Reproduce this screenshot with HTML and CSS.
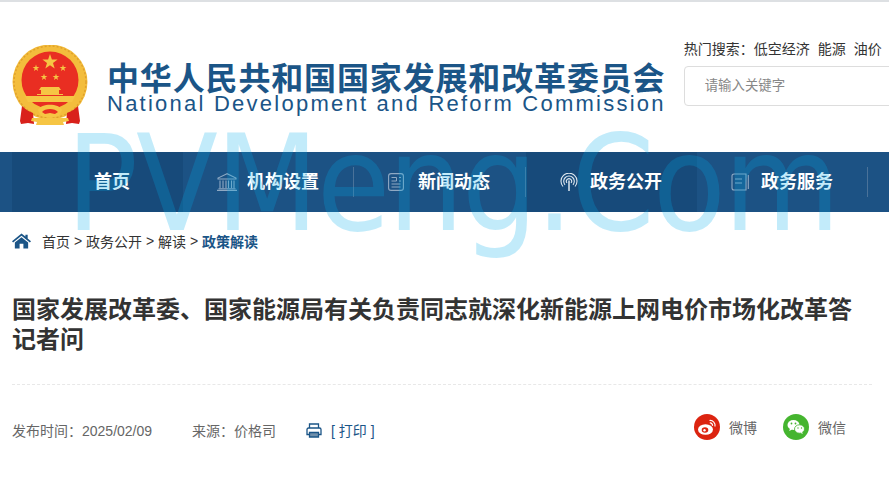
FILE: index.html
```html
<!DOCTYPE html>
<html lang="zh-CN">
<head>
    <meta charset="UTF-8">
    <title>国家发展改革委、国家能源局有关负责同志就深化新能源上网电价市场化改革答记者问</title>
    <link rel="stylesheet" href="styles.css">
</head>
<body>
    <header class="top">
        <svg class="emblem" viewBox="0 0 76 80" aria-hidden="true">
            <!-- ring and red field -->
            <circle cx="38" cy="37" r="37.500" fill="#f3bd3c"/>
            <circle cx="38" cy="37" r="36" fill="none" stroke="#e0a02c" stroke-width="1.500" stroke-dasharray="2 2"/>
            <circle cx="38" cy="35" r="28.500" fill="#e92e22"/>
            <!-- stars -->
            <polygon points="38,9 39.900,14.400 45.600,14.500 41,18 42.700,23.500 38,20.200 33.300,23.500 35,18 30.400,14.500 36.100,14.400" fill="#f6c544"/>
            <polygon points="24,19.500 24.800,22 27.400,22 25.300,23.500 26.100,26 24,24.500 21.900,26 22.700,23.500 20.600,22 23.200,22" fill="#f6c544"/>
            <polygon points="51,19.500 51.800,22 54.400,22 52.300,23.500 53.100,26 51,24.500 48.900,26 49.700,23.500 47.600,22 50.200,22" fill="#f6c544"/>
            <polygon points="32,28.500 32.800,31 35.400,31 33.300,32.500 34.100,35 32,33.500 29.900,35 30.700,32.500 28.600,31 31.200,31" fill="#f6c544"/>
            <polygon points="44,28.500 44.800,31 47.400,31 45.300,32.500 46.100,35 44,33.500 41.900,35 42.700,32.500 40.600,31 43.200,31" fill="#f6c544"/>
            <!-- gate -->
            <path d="M29 42h18l2 3h-2l1 4h3v1H25v-1h3l1-4h-2z" fill="#f6c544"/>
            <path d="M13 51h50l-3 6H16z" fill="#f6c544"/>
            <path d="M24 45h5v4h-5zM47 45h5v4h-5z" fill="#e92e22"/>
            <!-- drapes and bottom ornament -->
            <path d="M10 61c3 3 6 5 11 7l1 11-6-1-7 1-1-3z" fill="#d9211b"/>
            <path d="M66 61c-3 3-6 5-11 7l-1 11 6-1 7 1 1-3z" fill="#d9211b"/>
            <path d="M20 73h36l1 3-6 1 1 3H24l1-3-6-1z" fill="#f6c544"/>
            <path d="M26 65c3-7 21-7 24 0l-3 6-9 2-9-2z" fill="#f6c544"/>
            <path d="M30 67c3-4 13-4 16 0l-3 2-5-1-5 1z" fill="#e92e22"/>
        </svg>
        <div class="brand">
            <div class="brand-cn">中华人民共和国国家发展和改革委员会</div>
            <div class="brand-en">National Development and Reform Commission</div>
        </div>
        <div class="search-area">
            <div class="hot">热门搜索：<span>低空经济</span><span>能源</span><span>油价</span></div>
            <div class="search-box">请输入关键字</div>
        </div>
    </header>

    <nav class="nav">
        <a class="nav-item item-home"><span class="nav-text">首页</span></a>
        <a class="nav-item item-org">
            <svg class="nav-icon icon-wide" viewBox="0 0 20 18" aria-hidden="true">
                <path d="M10 .7 1 5v1h18V5zM3 7.500v7.500M6 7.500v7.500M9 7.500v7.500M11.500 7.500v7.500M14.500 7.500v7.500M17 7.500v7.500M1.500 15.800h17M0 17.400h20" fill="none" stroke="#8fa9c3" stroke-width="1.100"/>
            </svg><span class="nav-text">机构设置</span></a>
        <a class="nav-item item-news">
            <svg class="nav-icon" viewBox="0 0 16 18" aria-hidden="true">
                <rect x=".6" y=".6" width="14.800" height="16.800" rx="2.500" fill="none" stroke="#8fa9c3" stroke-width="1.100"/>
                <path d="M3.500 4.500h5v3.500h-5M11 4.500h2M11 8h2M3.500 11h9M3.500 14h9" fill="none" stroke="#8fa9c3" stroke-width="1"/>
            </svg><span class="nav-text">新闻动态</span></a>
        <a class="nav-item item-open">
            <svg class="nav-icon" viewBox="0 0 18 18" aria-hidden="true">
                <path d="M3 13.500a8 8 0 1 1 12 0M5 11.800a5.300 5.300 0 1 1 8 0M7 10a2.600 2.600 0 1 1 4 0" fill="none" stroke="#dfe8f0" stroke-width="1.100"/>
                <path d="M9 7.500V18" stroke="#dfe8f0" stroke-width="1.500"/>
            </svg><span class="nav-text">政务公开</span></a>
        <a class="nav-item item-service">
            <svg class="nav-icon" viewBox="0 0 18 18" aria-hidden="true">
                <path d="M15 1H3a2 2 0 0 0-2 2v12a2 2 0 0 0 2 2h12zM17.300 2v14" fill="none" stroke="#8fa9c3" stroke-width="1.100"/>
                <path d="M4 6h7M4 10h7" fill="none" stroke="#8fa9c3" stroke-width="1"/>
            </svg><span class="nav-text">政务服务</span></a>
    </nav>

    <div class="crumbs">
        <svg class="home-icon" viewBox="0 0 20 16" aria-hidden="true">
            <path d="M10 0 0 8.200l1.200 1.300L10 2.400l8.800 7.100L20 8.200 16.500 5.300V1.500h-2.400v1.800z" fill="#1b5587"/>
            <path d="M10 4 3 9.700V16h5v-5h4v5h5V9.700z" fill="#1b5587"/>
        </svg>
        <span>首页</span><i>&gt;</i><span>政务公开</span><i>&gt;</i><span>解读</span><i>&gt;</i><span class="current">政策解读</span>
    </div>

    <main class="article">
        <h1>国家发展改革委、国家能源局有关负责同志就深化新能源上网电价市场化改革答记者问</h1>
        <div class="meta">
            <span class="meta-date">发布时间：2025/02/09</span>
            <span class="meta-source">来源：价格司</span>
            <span class="meta-print">
                <svg class="print-icon" viewBox="0 0 16 15" aria-hidden="true">
                    <path d="M3.500 5V1h9v4M3.500 11.500H1V6.500A1.500 1.500 0 0 1 2.500 5h11A1.500 1.500 0 0 1 15 6.500v5h-2.500" fill="none" stroke="#1b5587" stroke-width="1.300"/>
                    <path d="M3.500 9.500h9V14h-9z" fill="#6f8fab" stroke="#1b5587" stroke-width="1.300"/>
                </svg>[ 打印 ]</span>
            <div class="shares">
                <span class="share">
                    <svg class="share-icon" viewBox="0 0 26 26" aria-hidden="true">
                        <circle cx="13" cy="13" r="13" fill="#dc2410"/>
                        <ellipse cx="11.500" cy="15.500" rx="7.500" ry="5.300" fill="#fff"/>
                        <ellipse cx="11" cy="16" rx="3.300" ry="2.700" fill="#dc2410"/>
                        <circle cx="10.500" cy="16.200" r="1.200" fill="#fff"/>
                        <path d="M15.500 6.500a5 5 0 0 1 5.500 6M15.800 9a2.400 2.400 0 0 1 2.700 2.800" fill="none" stroke="#fff" stroke-width="1.200"/>
                    </svg>微博</span>
                <span class="share">
                    <svg class="share-icon" viewBox="0 0 26 26" aria-hidden="true">
                        <circle cx="13" cy="13" r="13" fill="#45b52f"/>
                        <ellipse cx="10.500" cy="11" rx="6" ry="5" fill="#fff"/>
                        <path d="m7 14.500-.8 2.500 3-1.500z" fill="#fff"/>
                        <ellipse cx="16.500" cy="15" rx="5" ry="4.200" fill="#fff" stroke="#45b52f" stroke-width=".8"/>
                        <path d="m19 18 .8 2-2.500-1.200z" fill="#fff"/>
                        <circle cx="8.500" cy="9.500" r=".9" fill="#45b52f"/>
                        <circle cx="12.500" cy="9.500" r=".9" fill="#45b52f"/>
                        <circle cx="15" cy="14" r=".7" fill="#45b52f"/>
                        <circle cx="18.500" cy="14" r=".7" fill="#45b52f"/>
                    </svg>微信</span>
            </div>
        </div>
    </main>

    <div class="watermark">PVMeng.Com</div>
</body>
</html>
```

FILE: styles.css
```css
* {
    box-sizing: border-box;
}

html, body {
    height: 100%;
    overflow: hidden;
}

body {
    margin: 0;
    position: relative;
    background-color: #fff;
    color: #333;
    font-family: "Liberation Sans", "Noto Sans CJK SC", sans-serif;
}

/* header */
.top {
    display: flex;
    height: 152px;
    padding: 43px 0 0 12px;
    border-top: 2px solid #dde0e3;
}

.emblem {
    width: 76px;
    height: 80px;
    flex: none;
}

.brand {
    width: 559px;
    margin-left: 19px;
    padding-top: 12px;
    color: #1b5587;
    white-space: nowrap;
}

.brand-cn {
    font-family: "Noto Sans CJK SC", sans-serif;
    font-size: 32px;
    font-weight: 700;
    line-height: 38px;
    letter-spacing: .85px;
}

.brand-en {
    margin-top: -2px;
    font-size: 22px;
    line-height: 22px;
    letter-spacing: 2.24px;
}

.search-area {
    margin-left: 18px;
    margin-top: -6px;
    width: 260px;
    flex: none;
}

.hot {
    font-size: 14px;
    line-height: 20px;
    white-space: nowrap;
}

.hot span {
    margin-right: 8px;
}

.search-box {
    width: 260px;
    height: 40px;
    margin-top: 7px;
    padding-left: 20px;
    border: 1px solid #ddd;
    border-radius: 4px;
    color: #888;
    font-size: 13.4px;
    line-height: 37px;
}

/* nav */
.nav {
    display: flex;
    height: 60px;
    align-items: center;
    background: linear-gradient(90deg, #1c5284 0, #1c5284 12px, #174a7a 12px, #174a7a 183px, #1c5284 183px, #1c5284 526px, #174a7a 526px, #174a7a 697px, #1c5284 697px);
    color: #fff;
    font-size: 18px;
    font-weight: 700;
}

.nav-item {
    display: flex;
    align-items: center;
    height: 30px;
    flex: none;
    border-right: 1px solid #4a7299;
}

.nav-text {
    margin-bottom: 4px;
}

.item-home {
    width: 217px;
    padding-left: 94px;
    border-right: 0;
}

.item-org {
    width: 137px;
}

.item-news {
    width: 172px;
    padding-left: 34px;
}

.item-open {
    width: 171px;
    padding-left: 34px;
    border-right: 0;
}

.item-service {
    width: 171px;
    padding-left: 34px;
}

.nav-icon {
    width: 16px;
    height: 18px;
    margin-right: 14px;
    flex: none;
}

.item-open .nav-icon {
    width: 18px;
    margin-right: 12px;
}

.item-service .nav-icon {
    width: 18px;
    margin-right: 12px;
}

.nav-icon.icon-wide {
    width: 20px;
    margin-right: 10px;
}

/* breadcrumb */
.crumbs {
    display: flex;
    align-items: center;
    height: 60px;
    padding-left: 12px;
    padding-bottom: 2px;
    font-size: 14px;
}

.home-icon {
    width: 19px;
    height: 16px;
    margin-right: 11px;
}

.crumbs i {
    width: 16px;
    font-style: normal;
    text-align: center;
}

.crumbs .current {
    color: #1b5587;
    font-weight: 700;
}

/* article */
.article {
    margin: 0 17px 0 12px;
}

h1 {
    margin: 21px 0 0;
    padding-bottom: 31px;
    border-bottom: 1px dashed #e8e8e8;
    color: #333;
    font-family: "Noto Sans CJK SC", sans-serif;
    font-size: 24px;
    font-weight: 700;
    line-height: 30px;
}

.meta {
    display: flex;
    align-items: center;
    height: 26px;
    margin-top: 32px;
    color: #666;
    font-size: 14px;
}

.meta-date {
    width: 180px;
}

.meta-source {
    width: 114px;
}

.meta-print {
    display: flex;
    align-items: center;
    color: #1b5587;
}

.print-icon {
    width: 16px;
    height: 15px;
    margin-right: 9px;
}

.shares {
    display: flex;
    gap: 26px;
    margin: -6px 26px 0 auto;
}

.share {
    display: flex;
    align-items: center;
}

.share-icon {
    width: 26px;
    height: 26px;
    margin-right: 9px;
}

/* watermark sits over the page */
.watermark {
    position: absolute;
    left: 66px;
    top: 94px;
    color: rgba(0, 170, 235, .24);
    font-family: "DejaVu Sans Condensed", "DejaVu Sans", sans-serif;
    font-size: 133px;
    line-height: 180px;
    letter-spacing: -2.2px;
    white-space: nowrap;
    pointer-events: none;
}
```
